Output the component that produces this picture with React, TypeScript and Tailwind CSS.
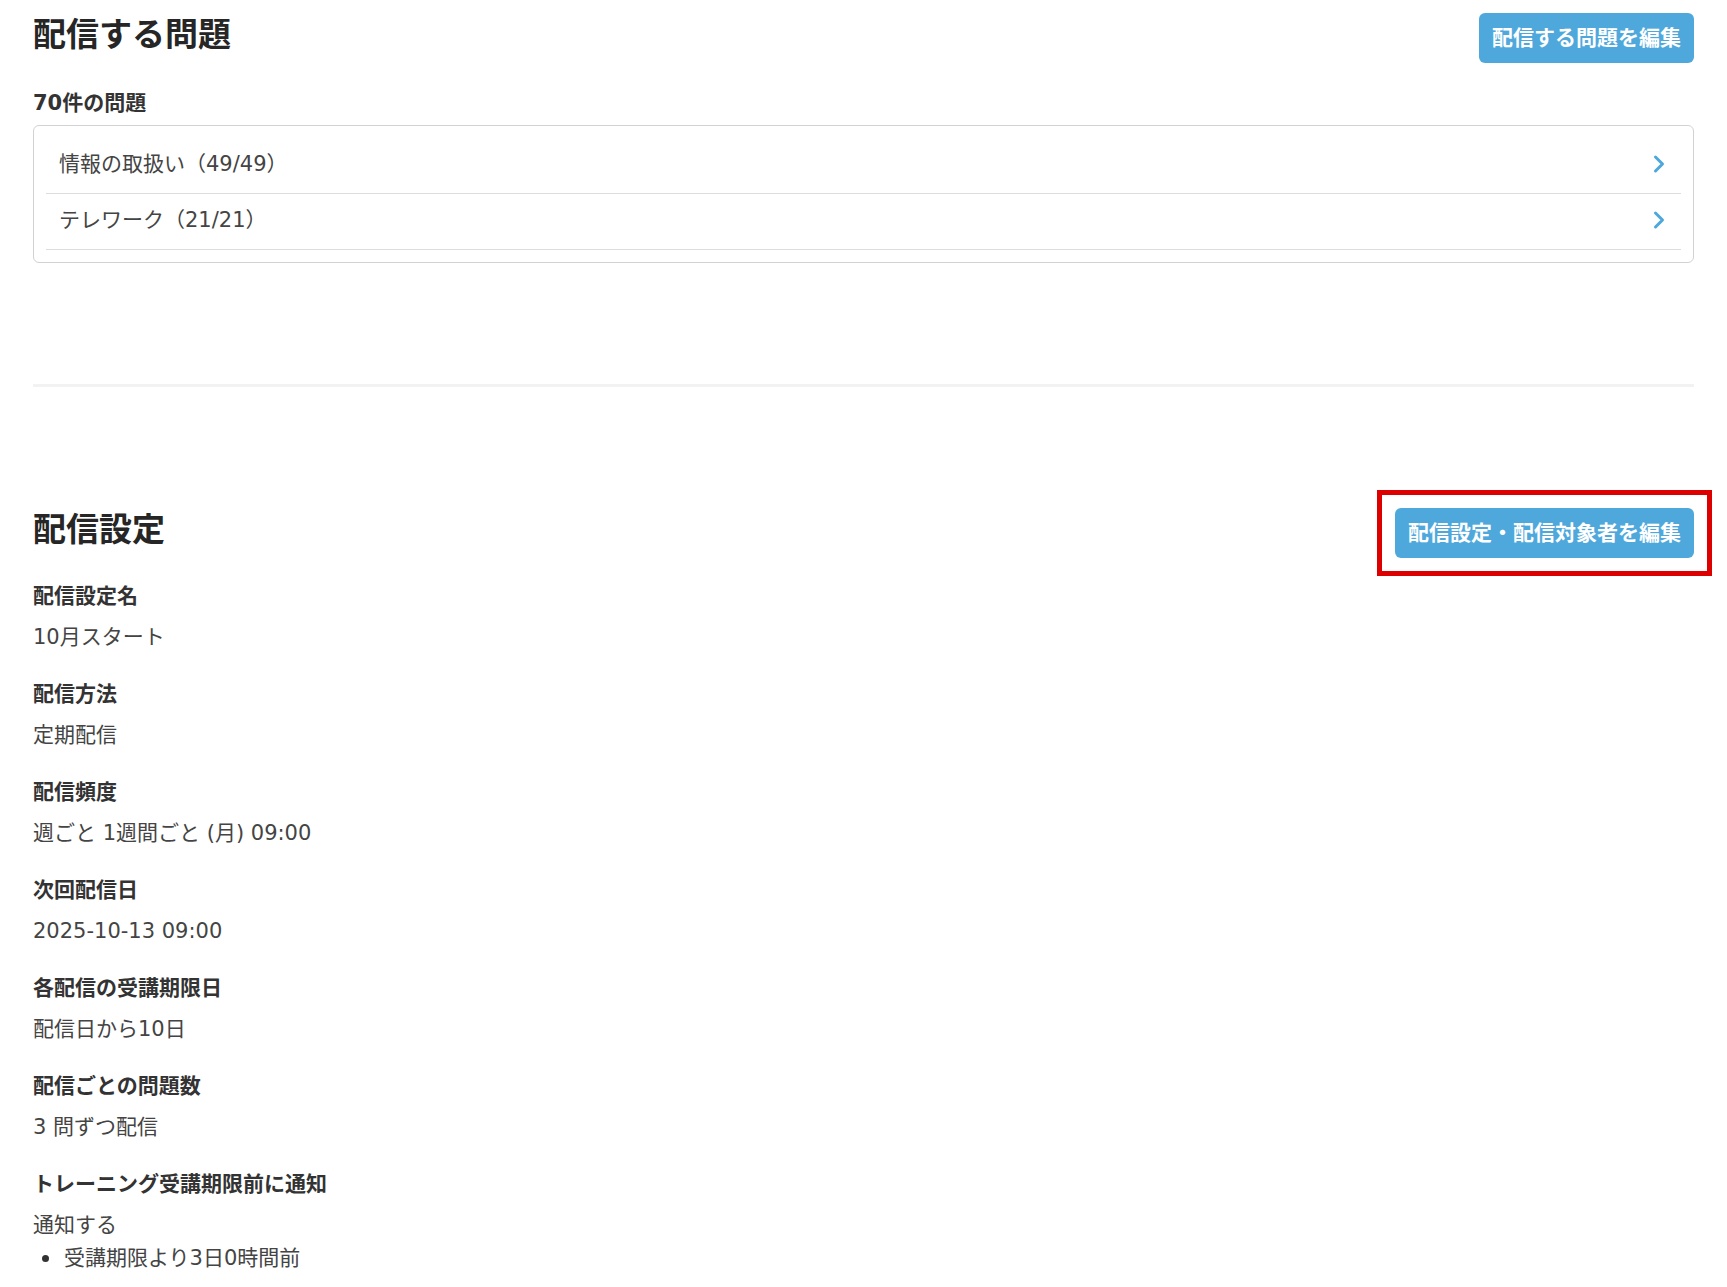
import { ChevronRight } from "lucide-react";

const topics = [
    { name: "情報の取扱い", done: 49, total: 49 },
    { name: "テレワーク", done: 21, total: 21 },
];

const settings = [
    { label: "配信設定名", value: "10月スタート" },
    { label: "配信方法", value: "定期配信" },
    { label: "配信頻度", value: "週ごと 1週間ごと (月) 09:00" },
    { label: "次回配信日", value: "2025-10-13 09:00" },
    { label: "各配信の受講期限日", value: "配信日から10日" },
    { label: "配信ごとの問題数", value: "3 問ずつ配信" },
];

function EditButton({ label, marked }: { label: string; marked?: boolean }) {
    return (
        <div className="relative">
            <button className="h-[50px] px-[13px] rounded-[6px] bg-[#4fa8db] text-white text-[21px] font-bold leading-none whitespace-nowrap">
                {label}
            </button>
            {/* annotation frame */}
            {marked && <span className="pointer-events-none absolute -inset-[18px] border-[5px] border-[#dc0000]" />}
        </div>
    );
}

export default function App() {
    return (
        <div className="min-h-screen bg-white px-[33px] font-['DejaVu_Sans','Noto_Sans_CJK_JP',sans-serif] text-[#333]">
            {/* 配信する問題 */}
            <section className="pt-[13px]">
                <div className="flex items-start justify-between">
                    <h2 className="text-[33px] font-bold leading-[44px] text-[#262626]">配信する問題</h2>
                    <EditButton label="配信する問題を編集" />
                </div>
                <p className="mt-[25px] text-[21px] font-bold leading-[30px] text-[#333]">70件の問題</p>
                <ul className="mt-[7px] border border-[#d2d2d2] rounded-[6px] p-[12px]">
                    {topics.map((t) => (
                        <li
                            key={t.name}
                            className="flex h-[56px] items-center justify-between border-b border-[#dddddd] pb-[3px] pl-[13px] pr-[8px]"
                        >
                            <span className="text-[21px] leading-[30px] text-[#444]">
                                {t.name}（{t.done}/{t.total}）
                            </span>
                            <ChevronRight size={28} strokeWidth={2.6} className="text-[#4fa8db]" />
                        </li>
                    ))}
                </ul>
            </section>

            <hr className="mt-[121px] border-0 h-[3px] bg-[#f2f2f2]" />

            {/* 配信設定 */}
            <section className="pt-[121px] pb-[30px]">
                <div className="flex items-start justify-between">
                    <h2 className="text-[33px] font-bold leading-[44px] text-[#262626]">配信設定</h2>
                    <EditButton label="配信設定・配信対象者を編集" marked />
                </div>
                <dl className="mt-[23px] flex flex-col gap-[27px]">
                    {settings.map((s) => (
                        <div key={s.label}>
                            <dt className="text-[21px] font-bold leading-[30px] text-[#333]">{s.label}</dt>
                            <dd className="mt-[11px] text-[21px] leading-[30px] text-[#444]">{s.value}</dd>
                        </div>
                    ))}
                    <div>
                        <dt className="text-[21px] font-bold leading-[30px] text-[#333]">
                            トレーニング受講期限前に通知
                        </dt>
                        <dd className="mt-[11px] text-[21px] leading-[30px] text-[#444]">
                            通知する
                            <ul className="mt-[3px] pl-[9px]">
                                <li className="flex items-center gap-[15px]">
                                    <span className="h-[7px] w-[7px] rounded-full bg-[#333]" />
                                    受講期限より3日0時間前
                                </li>
                            </ul>
                        </dd>
                    </div>
                </dl>
            </section>
        </div>
    );
}
